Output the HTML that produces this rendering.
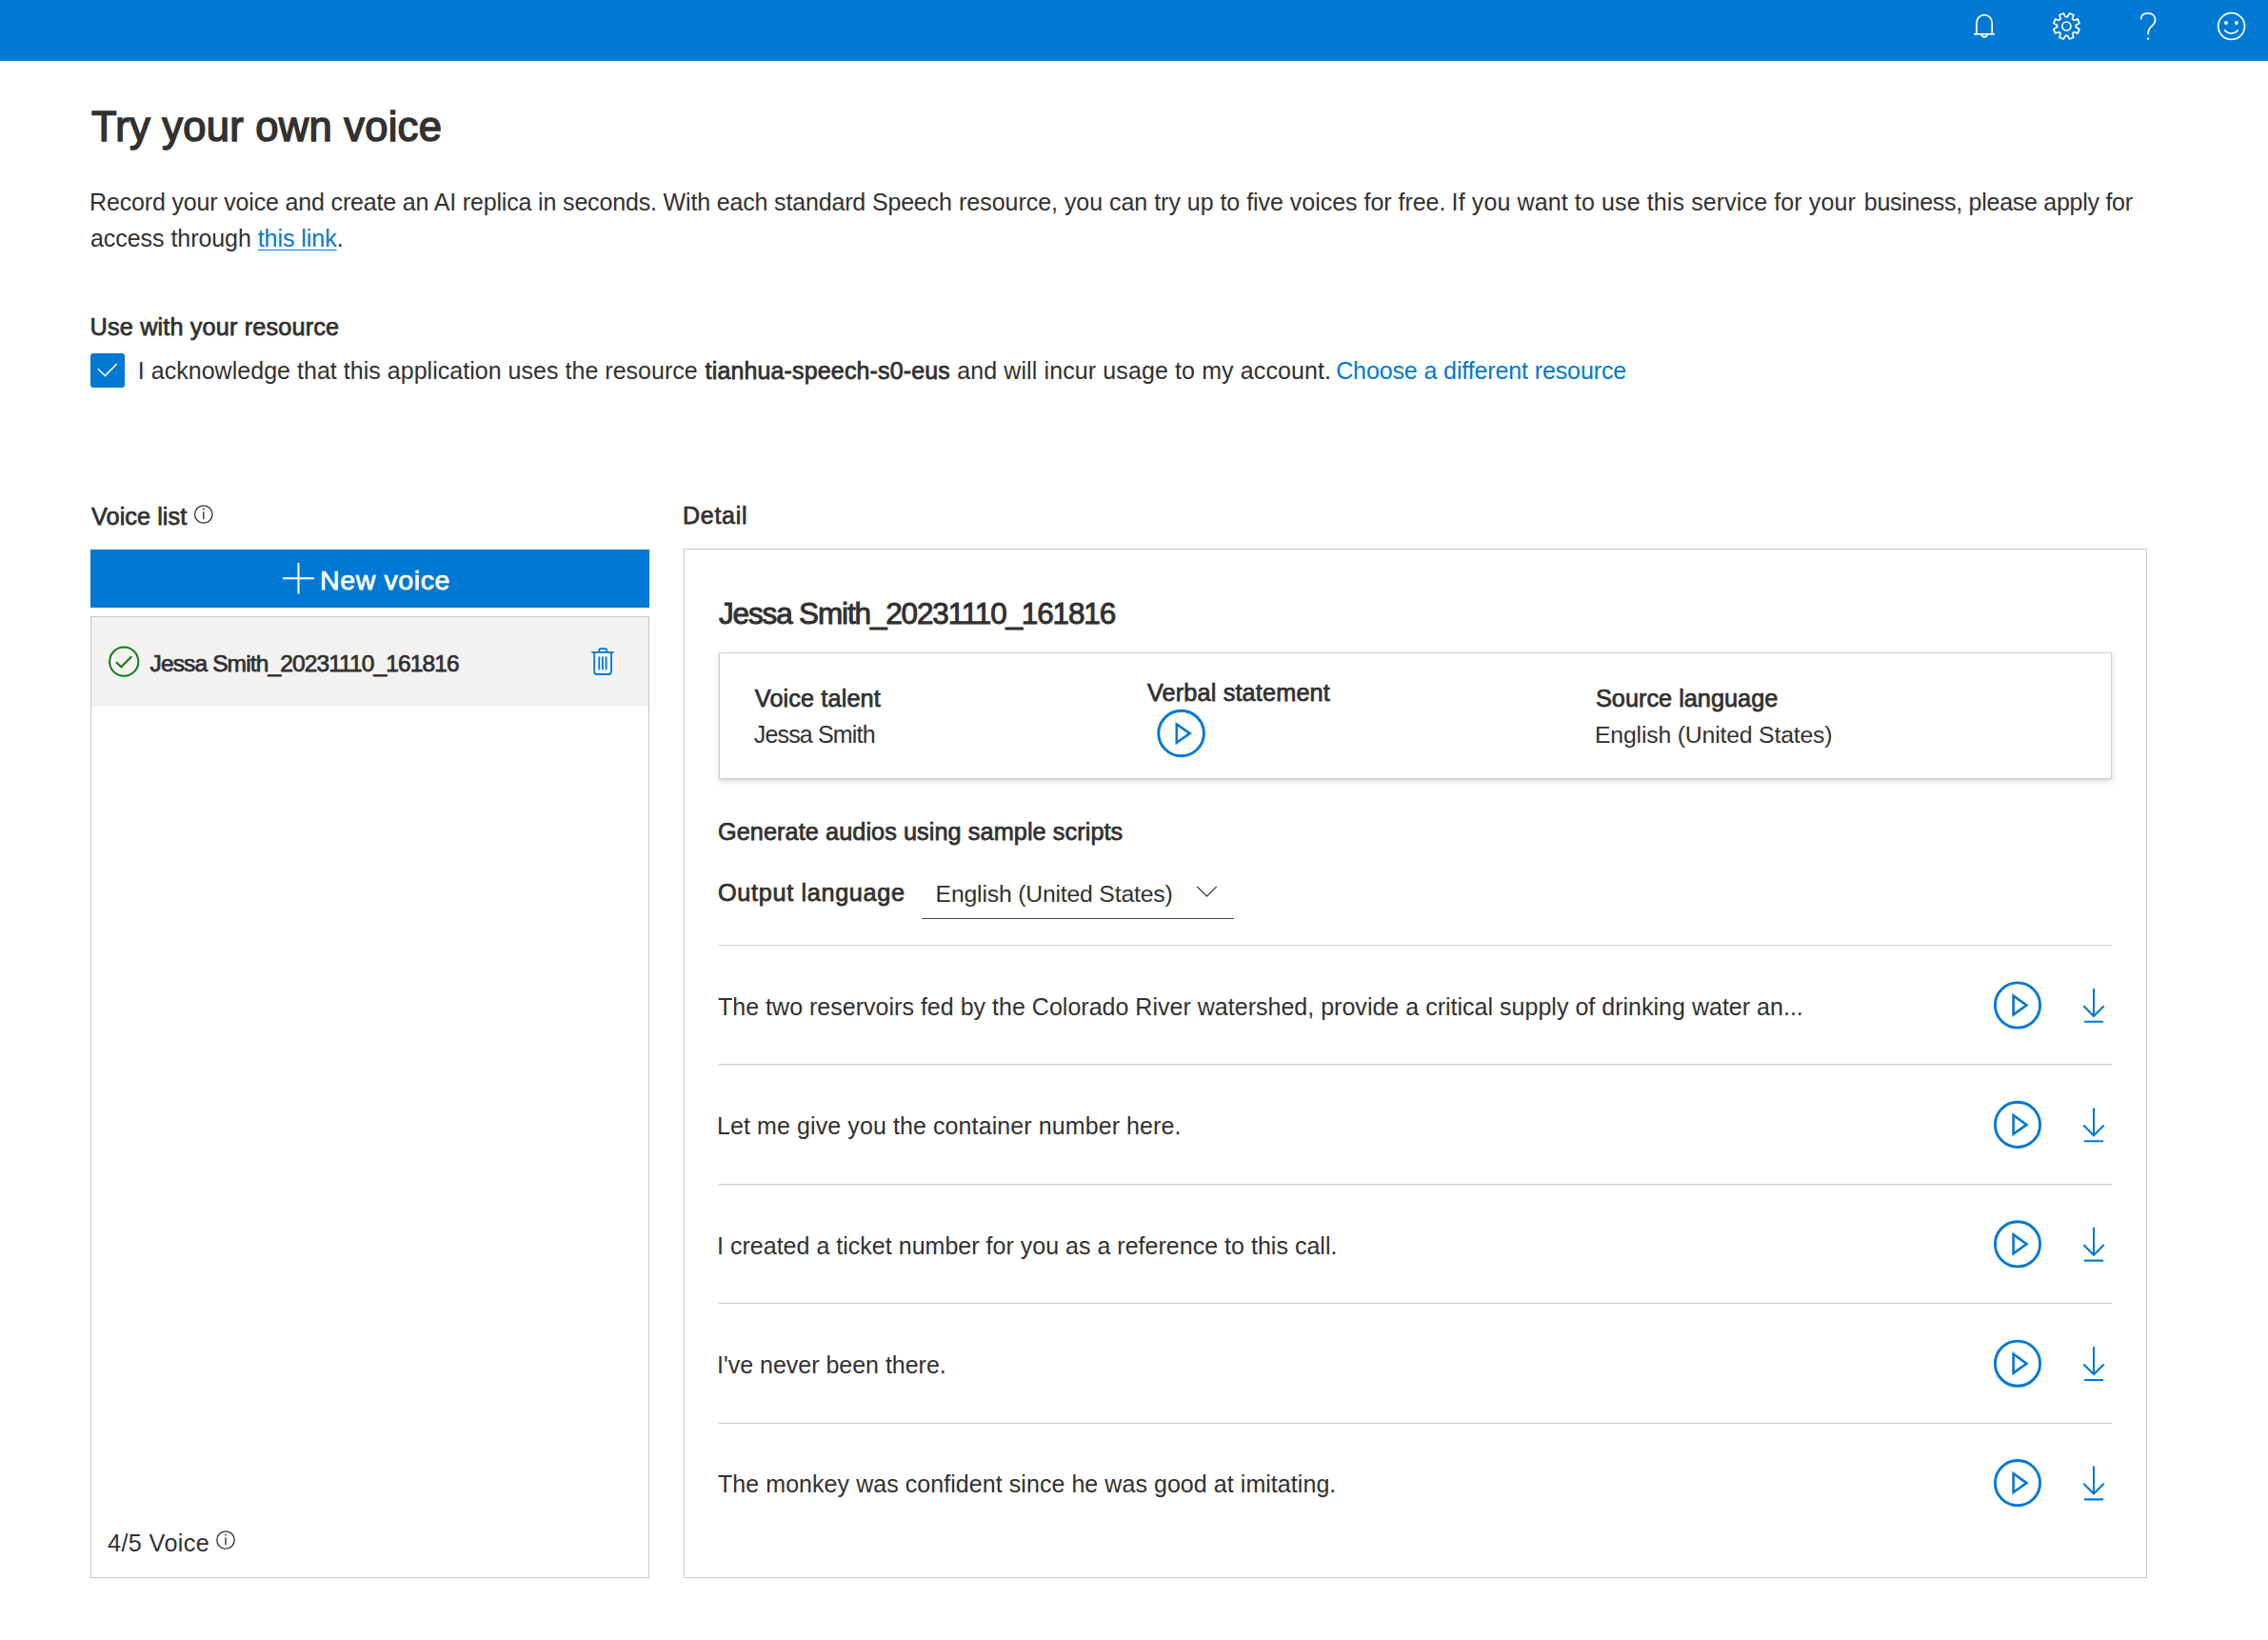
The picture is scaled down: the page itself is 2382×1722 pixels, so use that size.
<!DOCTYPE html>
<html>
<head>
<meta charset="utf-8">
<style>
html,body{margin:0;padding:0;background:#fff;width:2382px;height:1722px;overflow:hidden;}
body{position:relative;font-family:"Liberation Sans",sans-serif;color:#323130;}
.t{position:absolute;white-space:nowrap;line-height:1;}
.sbi{-webkit-text-stroke:0.75px #323130;}
.abs{position:absolute;}
svg{position:absolute;left:0;top:0;overflow:visible;}
.sep{position:absolute;left:755px;width:1463px;height:1px;background:#c8c8c8;}
</style>
</head>
<body>
<div class="abs" style="left:0;top:0;width:2382px;height:64px;background:#0078d4;"></div>
<svg width="2382" height="64">
  <g fill="none" stroke="#fff" stroke-width="1.7">
    <path d="M2075.9 35.8 V23.8 A8.15 8.15 0 0 1 2092.2 23.8 V35.8"/>
    <path d="M2073 35.8 H2095"/>
    <path d="M2081.3 36 C2081.3 39.9 2086.9 39.9 2086.9 36"/>
    <path d="M2173.53 13.96 L2177.77 15.71 L2176.63 19.81 L2178.09 21.27 L2182.19 20.13 L2183.94 24.37 L2180.25 26.47 L2180.25 28.53 L2183.94 30.63 L2182.19 34.87 L2178.09 33.73 L2176.63 35.19 L2177.77 39.29 L2173.53 41.04 L2171.43 37.35 L2169.37 37.35 L2167.27 41.04 L2163.03 39.29 L2164.17 35.19 L2162.71 33.73 L2158.61 34.87 L2156.86 30.63 L2160.55 28.53 L2160.55 26.47 L2156.86 24.37 L2158.61 20.13 L2162.71 21.27 L2164.17 19.81 L2163.03 15.71 L2167.27 13.96 L2169.37 17.65 L2171.43 17.65 Z" stroke-linejoin="miter"/>
    <circle cx="2170.4" cy="27.5" r="4.5"/>
    <path d="M2248.6 20.5 C2248.6 16.3 2251.5 13.9 2255.9 13.9 C2260.5 13.9 2263.6 16.8 2263.6 21 C2263.6 25.3 2259.8 26.8 2257.6 30 C2256.4 31.8 2256 33.4 2256 36.6"/>
    <circle cx="2343.6" cy="27.6" r="13.9"/>
    <path d="M2336.3 31.3 C2339.6 36.3 2347.3 36.3 2350.6 31.3"/>
  </g>
  <g fill="#fff">
    <circle cx="2256" cy="40.6" r="1.2"/>
    <circle cx="2338" cy="24" r="2"/>
    <circle cx="2348.8" cy="24" r="2"/>
  </g>
</svg>

<div class="abs" style="left:95px;top:371px;width:36px;height:36px;background:#0078d4;border-radius:3px;"></div>
<svg width="200" height="420"><path d="M103 387.3 L110.3 394.6 L122.8 382" fill="none" stroke="#fff" stroke-width="1.6"/></svg>

<svg width="260" height="1640">
  <g fill="none" stroke="#323130" stroke-width="1.3">
    <circle cx="213.8" cy="540" r="9.2"/>
    <circle cx="237" cy="1617" r="9.2"/>
  </g>
  <path d="M213.8 537.2 V545.2 M237 1614.2 V1622.2" stroke="#323130" stroke-width="1.4"/>
  <circle cx="213.8" cy="534.6" r="0.95" fill="#323130"/>
  <circle cx="237" cy="1611.6" r="0.95" fill="#323130"/>
</svg>

<div class="abs" style="left:95px;top:577px;width:587px;height:61px;background:#0078d4;"></div>
<svg width="700" height="700"><path d="M297 607.2 H330 M313.5 591 V623.4" stroke="#fff" stroke-width="2"/></svg>

<div class="abs" style="left:95px;top:647px;width:587px;height:1010px;box-sizing:border-box;border:1px solid #c8c8c8;"></div>
<div class="abs" style="left:96px;top:648px;width:585px;height:94px;background:#f3f2f1;"></div>
<svg width="700" height="760">
  <circle cx="130.2" cy="694.7" r="15.1" fill="none" stroke="#107c10" stroke-width="2"/>
  <path d="M122 695.2 L127.3 700.3 L138.3 689.2" fill="none" stroke="#107c10" stroke-width="2"/>
  <g fill="none" stroke="#0078d4" stroke-width="1.8">
    <path d="M621.3 684.9 H644.7"/>
    <path d="M629.3 684.9 V682.5 Q629.3 681.2 630.6 681.2 H635.8 Q637.1 681.2 637.1 682.5 V684.9"/>
    <path d="M624.2 685 V705.3 Q624.2 708 626.9 708 H639.3 Q642 708 642 705.3 V685"/>
    <path d="M629.3 689.5 V703.3 M632.9 689.5 V703.3 M636.6 689.5 V703.3"/>
  </g>
</svg>

<div class="abs" style="left:718px;top:576px;width:1537px;height:1081px;box-sizing:border-box;border:1px solid #c8c8c8;"></div>
<div class="abs" style="left:755px;top:685px;width:1463px;height:133px;box-sizing:border-box;border:1px solid #cfcfcf;box-shadow:0 3.2px 7.2px rgba(0,0,0,0.11),0 0.6px 1.8px rgba(0,0,0,0.09);background:#fff;"></div>
<svg width="1300" height="1000">
  <circle cx="1240.6" cy="770" r="23.8" fill="none" stroke="#0078d4" stroke-width="2.9"/>
  <path d="M1235.8 760.4 V779.8 L1249.6 770.1 Z" fill="none" stroke="#0078d4" stroke-width="2.6"/>
  <path d="M1257.3 930.9 L1267.5 941.1 L1277.7 930.9" fill="none" stroke="#4a4846" stroke-width="1.35"/>
</svg>
<div class="abs" style="left:968px;top:964px;width:328px;height:1px;background:#4a4846;"></div>

<svg width="2382" height="1722">
<circle cx="2119" cy="1055.50" r="23.6" fill="none" stroke="#0078d4" stroke-width="2.9"/>
<path d="M2114.6 1045.60 V1065.40 L2128.4 1055.50 Z" fill="none" stroke="#0078d4" stroke-width="2.6" stroke-linejoin="miter"/>
<path d="M2199 1038.00 V1066.50 M2188.3 1056.20 L2199 1066.90 L2209.7 1056.20 M2189 1072.80 H2209" fill="none" stroke="#0078d4" stroke-width="2.1"/>
<circle cx="2119" cy="1180.90" r="23.6" fill="none" stroke="#0078d4" stroke-width="2.9"/>
<path d="M2114.6 1171.00 V1190.80 L2128.4 1180.90 Z" fill="none" stroke="#0078d4" stroke-width="2.6" stroke-linejoin="miter"/>
<path d="M2199 1163.40 V1191.90 M2188.3 1181.60 L2199 1192.30 L2209.7 1181.60 M2189 1198.20 H2209" fill="none" stroke="#0078d4" stroke-width="2.1"/>
<circle cx="2119" cy="1306.30" r="23.6" fill="none" stroke="#0078d4" stroke-width="2.9"/>
<path d="M2114.6 1296.40 V1316.20 L2128.4 1306.30 Z" fill="none" stroke="#0078d4" stroke-width="2.6" stroke-linejoin="miter"/>
<path d="M2199 1288.80 V1317.30 M2188.3 1307.00 L2199 1317.70 L2209.7 1307.00 M2189 1323.60 H2209" fill="none" stroke="#0078d4" stroke-width="2.1"/>
<circle cx="2119" cy="1431.70" r="23.6" fill="none" stroke="#0078d4" stroke-width="2.9"/>
<path d="M2114.6 1421.80 V1441.60 L2128.4 1431.70 Z" fill="none" stroke="#0078d4" stroke-width="2.6" stroke-linejoin="miter"/>
<path d="M2199 1414.20 V1442.70 M2188.3 1432.40 L2199 1443.10 L2209.7 1432.40 M2189 1449.00 H2209" fill="none" stroke="#0078d4" stroke-width="2.1"/>
<circle cx="2119" cy="1557.10" r="23.6" fill="none" stroke="#0078d4" stroke-width="2.9"/>
<path d="M2114.6 1547.20 V1567.00 L2128.4 1557.10 Z" fill="none" stroke="#0078d4" stroke-width="2.6" stroke-linejoin="miter"/>
<path d="M2199 1539.60 V1568.10 M2188.3 1557.80 L2199 1568.50 L2209.7 1557.80 M2189 1574.40 H2209" fill="none" stroke="#0078d4" stroke-width="2.1"/>
</svg>

<div class="t sb" id="title" style="left:96.00px;top:112.01px;font-size:43.5px;letter-spacing:0.259px;color:#323130;-webkit-text-stroke:1.5px #323130;">Try your own voice</div>
<div class="t" id="p1a" style="left:94.00px;top:200.41px;font-size:25px;letter-spacing:-0.161px;color:#323130;">Record your voice and create an AI replica in seconds. With each standard Speech</div>
<div class="t" id="p1b" style="left:1007.00px;top:200.41px;font-size:25px;letter-spacing:-0.028px;color:#323130;">resource, you can try up to five voices for free.</div>
<div class="t" id="p1c" style="left:1524.60px;top:200.41px;font-size:25px;letter-spacing:0.118px;color:#323130;">If you want to use this service for your</div>
<div class="t" id="p1d" style="left:1957.80px;top:200.41px;font-size:25px;letter-spacing:-0.274px;color:#323130;">business, please apply for</div>
<div class="t" id="p2" style="left:95.00px;top:238.21px;font-size:25px;letter-spacing:-0.052px;color:#323130;">access through <span style="color:#0078d4;text-decoration:underline;text-underline-offset:3px;text-decoration-thickness:1px">this link</span>.</div>
<div class="t sb" id="use" style="left:94.60px;top:331.21px;font-size:25.3px;letter-spacing:0.133px;color:#323130;-webkit-text-stroke:0.75px #323130;">Use with your resource</div>
<div class="t" id="acka" style="left:144.80px;top:376.60px;font-size:25px;letter-spacing:0.029px;color:#323130;">I acknowledge that this application uses the resource</div>
<div class="t sb" id="ackb" style="left:740.60px;top:376.60px;font-size:25px;letter-spacing:0.144px;color:#323130;-webkit-text-stroke:0.75px #323130;">tianhua-speech-s0-eus</div>
<div class="t" id="ackc" style="left:1005.20px;top:376.60px;font-size:25px;letter-spacing:0.111px;color:#323130;">and will incur usage to my account.</div>
<div class="t" id="ackd" style="left:1403.20px;top:376.60px;font-size:25px;letter-spacing:-0.118px;color:#0078d4;">Choose a different resource</div>
<div class="t sb" id="vl" style="left:96.00px;top:530.00px;font-size:25.3px;letter-spacing:0.040px;color:#323130;-webkit-text-stroke:0.75px #323130;">Voice list</div>
<div class="t sb" id="det" style="left:717.00px;top:529.00px;font-size:25px;letter-spacing:0.738px;color:#323130;-webkit-text-stroke:0.75px #323130;">Detail</div>
<div class="t sb" id="nv" style="left:336.00px;top:595.01px;font-size:28.5px;letter-spacing:0.619px;color:#ffffff;-webkit-text-stroke:0.75px #ffffff;">New voice</div>
<div class="t sb" id="jl" style="left:157.60px;top:685.11px;font-size:24.5px;letter-spacing:-0.876px;color:#323130;-webkit-text-stroke:0.75px #323130;">Jessa Smith_20231110_161816</div>
<div class="t" id="v45" style="left:113.00px;top:1608.00px;font-size:25.2px;letter-spacing:0.394px;color:#323130;">4/5 Voice</div>
<div class="t sb" id="jt" style="left:755.00px;top:629.31px;font-size:31.5px;letter-spacing:-1.153px;color:#323130;-webkit-text-stroke:0.95px #323130;">Jessa Smith_20231110_161816</div>
<div class="t sb" id="vt" style="left:792.80px;top:720.90px;font-size:25.3px;letter-spacing:0.106px;color:#323130;-webkit-text-stroke:0.75px #323130;">Voice talent</div>
<div class="t" id="vtn" style="left:791.80px;top:759.31px;font-size:25px;letter-spacing:-0.837px;color:#323130;">Jessa Smith</div>
<div class="t sb" id="vs" style="left:1205.00px;top:715.00px;font-size:25.3px;letter-spacing:0.132px;color:#323130;-webkit-text-stroke:0.75px #323130;">Verbal statement</div>
<div class="t sb" id="sl" style="left:1676.00px;top:721.00px;font-size:25.3px;letter-spacing:0.000px;color:#323130;-webkit-text-stroke:0.75px #323130;">Source language</div>
<div class="t" id="sln" style="left:1675.00px;top:760.01px;font-size:24.8px;letter-spacing:-0.184px;color:#323130;">English (United States)</div>
<div class="t sb" id="gen" style="left:754.00px;top:861.00px;font-size:25.3px;letter-spacing:0.057px;color:#323130;-webkit-text-stroke:0.75px #323130;">Generate audios using sample scripts</div>
<div class="t sb" id="out" style="left:754.00px;top:924.81px;font-size:25.3px;letter-spacing:0.643px;color:#323130;-webkit-text-stroke:0.75px #323130;">Output language</div>
<div class="t" id="dd" style="left:982.60px;top:927.01px;font-size:24.8px;letter-spacing:-0.205px;color:#323130;">English (United States)</div>
<div class="t" id="r1" style="left:754.00px;top:1044.81px;font-size:25px;letter-spacing:0.017px;color:#323130;">The two reservoirs fed by the Colorado River watershed, provide a critical supply of drinking water an...</div>
<div class="t" id="r2" style="left:753.00px;top:1170.21px;font-size:25px;letter-spacing:0.094px;color:#323130;">Let me give you the container number here.</div>
<div class="t" id="r3" style="left:753.00px;top:1295.60px;font-size:25px;letter-spacing:0.018px;color:#323130;">I created a ticket number for you as a reference to this call.</div>
<div class="t" id="r4" style="left:753.00px;top:1421.00px;font-size:25px;letter-spacing:-0.013px;color:#323130;">I've never been there.</div>
<div class="t" id="r5" style="left:754.00px;top:1546.40px;font-size:25px;letter-spacing:0.057px;color:#323130;">The monkey was confident since he was good at imitating.</div>
<div class="sep" style="top:991.90px"></div>
<div class="sep" style="top:1117.30px"></div>
<div class="sep" style="top:1242.70px"></div>
<div class="sep" style="top:1368.10px"></div>
<div class="sep" style="top:1493.50px"></div>
</body>
</html>
